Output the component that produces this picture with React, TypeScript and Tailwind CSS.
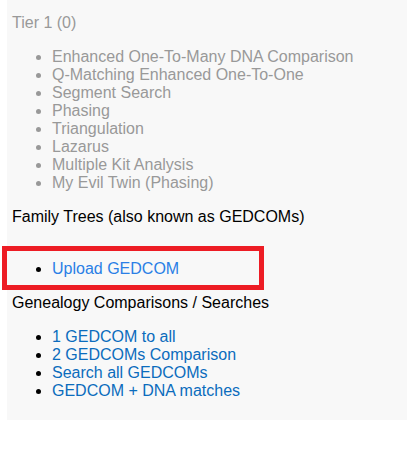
import React from "react";

const tier = [
  "Enhanced One-To-Many DNA Comparison",
  "Q-Matching Enhanced One-To-One",
  "Segment Search",
  "Phasing",
  "Triangulation",
  "Lazarus",
  "Multiple Kit Analysis",
  "My Evil Twin (Phasing)",
];

const comps = [
  "1 GEDCOM to all",
  "2 GEDCOMs Comparison",
  "Search all GEDCOMs",
  "GEDCOM + DNA matches",
];

export default function App() {
  return (
    <div
      className="relative w-[413px] h-[461px] bg-white text-[16px] leading-[18px] text-black"
      style={{ fontFamily: '"Liberation Sans", Arial, sans-serif' }}
    >
      <div className="ml-[7px] w-[400px] bg-[#f8f8f8] pl-[5px] pt-[14px] pb-[4px]">
        <div className="text-[#999999]">Tier 1 (0)</div>
        <ul className="list-disc pl-10 my-4 text-[#999999]">
          {tier.map((t) => (
            <li key={t}>{t}</li>
          ))}
        </ul>
        <div>Family Trees (also known as GEDCOMs)</div>
        <div>&nbsp;</div>
        <ul className="list-disc pl-10 my-4">
          <li>
            <a className="text-[#2a7fe6]">Upload GEDCOM</a>
          </li>
        </ul>
        <div>Genealogy Comparisons / Searches</div>
        <ul className="list-disc pl-10 my-4">
          {comps.map((t) => (
            <li key={t}>
              <a className="text-[#0b6cbd]">{t}</a>
            </li>
          ))}
        </ul>
      </div>
      <div className="absolute left-[2px] top-[246px] w-[262px] h-[44px] border-[5px] border-[#ed1c24]" />
    </div>
  );
}
